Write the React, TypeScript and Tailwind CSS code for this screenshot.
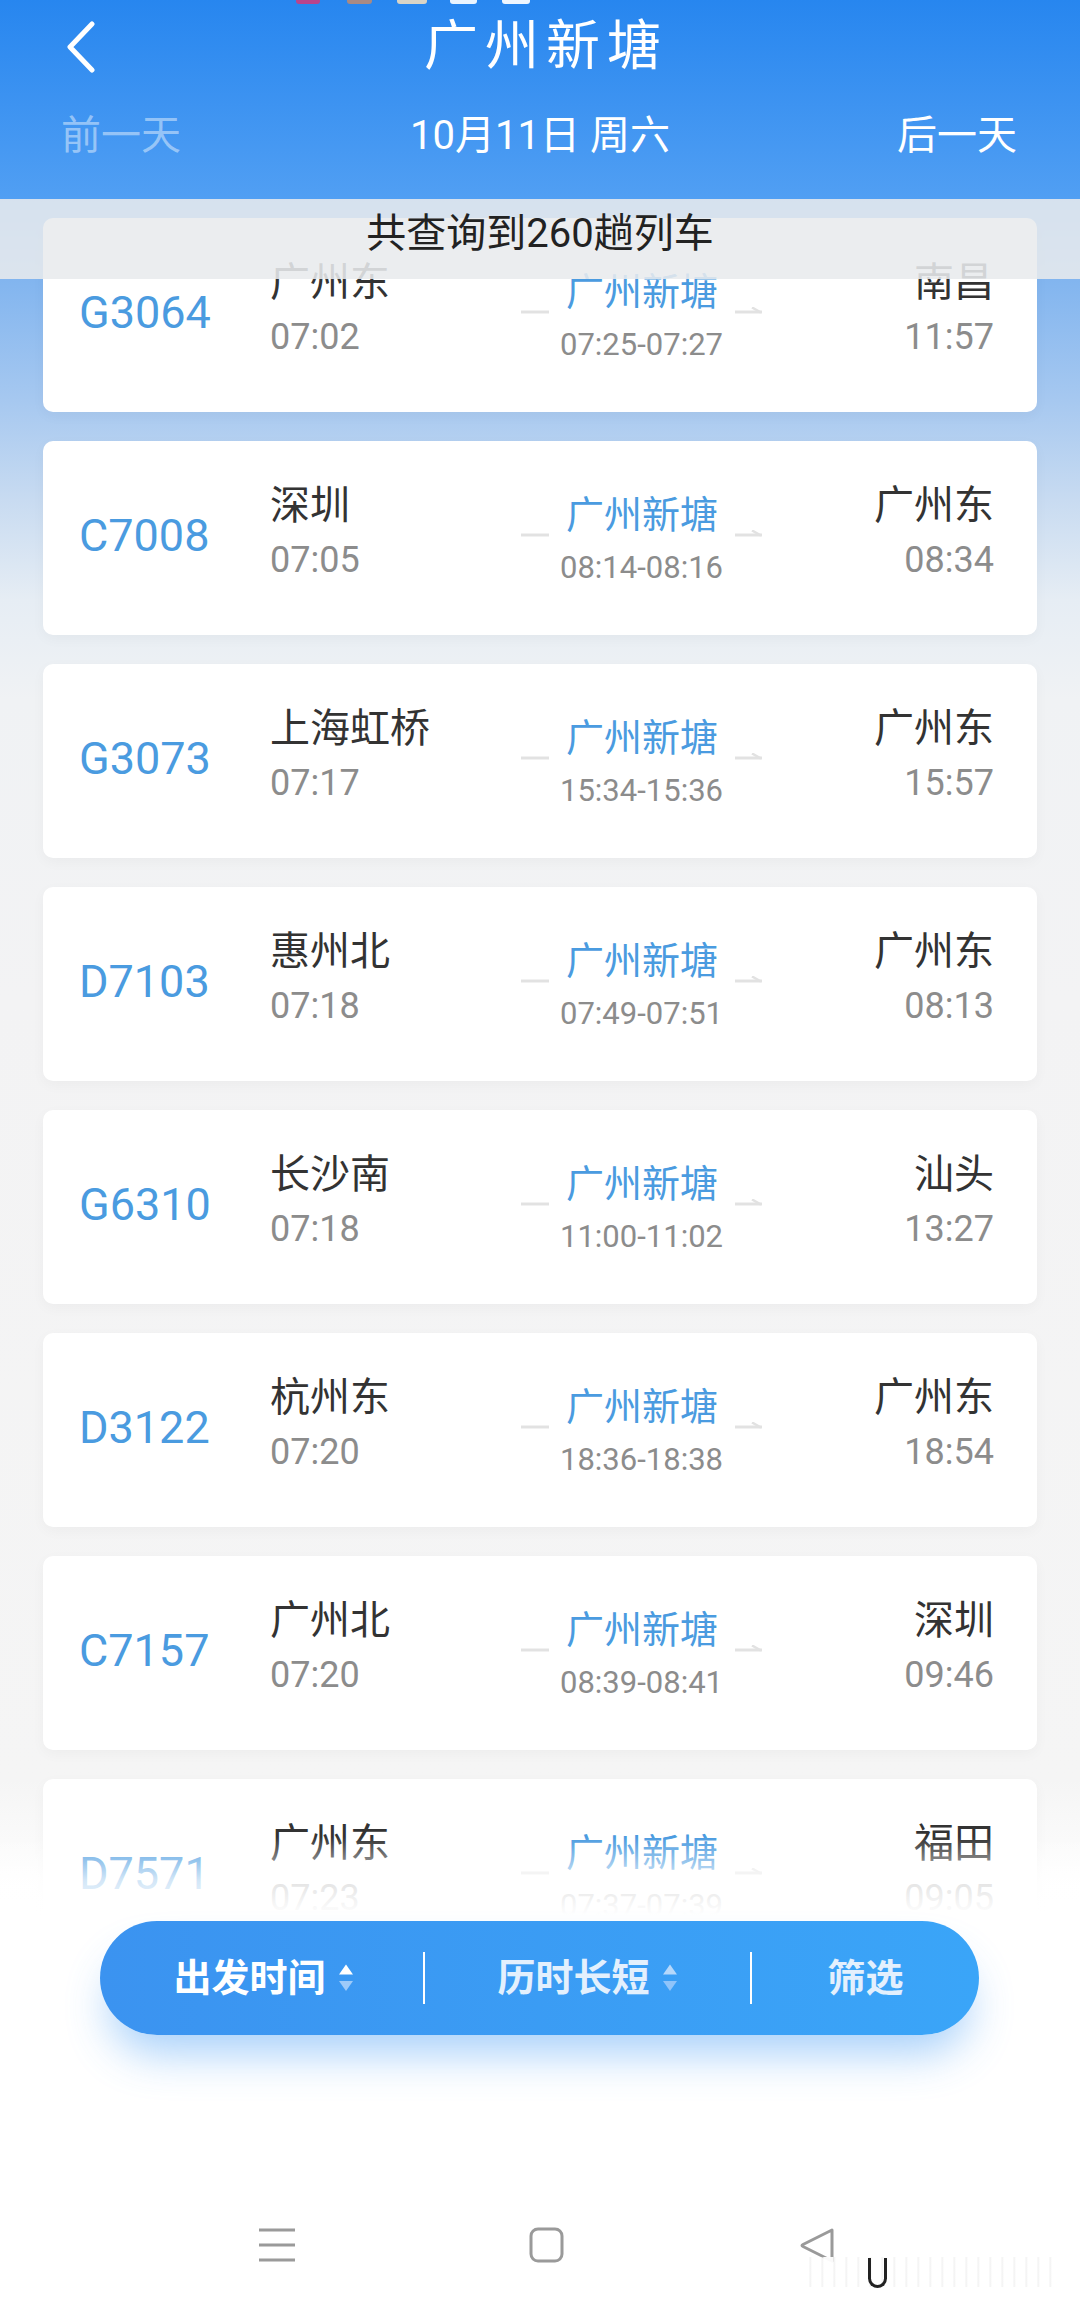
import React from "react";

type Train = {
  no: string;
  from: string;
  dep: string;
  stop: string;
  to: string;
  arr: string;
};

const trains: Train[] = [
  { no: "G3064", from: "广州东", dep: "07:02", stop: "07:25-07:27", to: "南昌", arr: "11:57" },
  { no: "C7008", from: "深圳", dep: "07:05", stop: "08:14-08:16", to: "广州东", arr: "08:34" },
  { no: "G3073", from: "上海虹桥", dep: "07:17", stop: "15:34-15:36", to: "广州东", arr: "15:57" },
  { no: "D7103", from: "惠州北", dep: "07:18", stop: "07:49-07:51", to: "广州东", arr: "08:13" },
  { no: "G6310", from: "长沙南", dep: "07:18", stop: "11:00-11:02", to: "汕头", arr: "13:27" },
  { no: "D3122", from: "杭州东", dep: "07:20", stop: "18:36-18:38", to: "广州东", arr: "18:54" },
  { no: "C7157", from: "广州北", dep: "07:20", stop: "08:39-08:41", to: "深圳", arr: "09:46" },
  { no: "D7571", from: "广州东", dep: "07:23", stop: "07:37-07:39", to: "福田", arr: "09:05" },
];

function TrainCard({ t }: { t: Train }) {
  return (
    <div className="mx-[43px] h-[194px] shrink-0 rounded-[10px] bg-white shadow-[0_4px_14px_rgba(0,0,0,0.035)] pl-[36px] pr-[44px] grid grid-cols-[191px_251px_241px_232px]">
      <div className="pt-[72px]">
        <div className="text-[45px] leading-[46px] text-[#4a9be0]">{t.no}</div>
      </div>
      <div className="pt-[45px] flex flex-col">
        <div className="text-[40px] leading-[40px] text-[#333333]">{t.from}</div>
        <div className="mt-[16px] text-[36px] leading-[36px] text-[#8c8c8c]">{t.dep}</div>
      </div>
      <div className="pt-[55px] flex flex-col items-center">
        <div className="flex items-end">
          <svg width="28" height="8" viewBox="0 0 28 8" className="translate-y-[4px]">
            <line x1="0" y1="5" x2="28" y2="5" stroke="#e2e2e2" strokeWidth="3" />
          </svg>
          <div className="mx-[17px] text-[38px] leading-[38px] text-[#4a9be0]">广州新塘</div>
          <svg width="27" height="8" viewBox="0 0 27 8" className="translate-y-[4px]">
            <line x1="0" y1="5" x2="27" y2="5" stroke="#e2e2e2" strokeWidth="3" />
            <line x1="26" y1="5.5" x2="17" y2="0.5" stroke="#e2e2e2" strokeWidth="2.5" />
          </svg>
        </div>
        <div className="mt-[18px] text-[31px] leading-[31px] text-[#8c8c8c]">{t.stop}</div>
      </div>
      <div className="pt-[45px] flex flex-col items-end">
        <div className="text-[40px] leading-[40px] text-[#333333]">{t.to}</div>
        <div className="mt-[16px] text-[36px] leading-[36px] text-[#8c8c8c]">{t.arr}</div>
      </div>
    </div>
  );
}

function SortArrows({ dim }: { dim?: boolean }) {
  return (
    <svg width="16" height="28" viewBox="0 0 16 28" className="ml-[12px]">
      <path d="M8 0.5 L15 10.5 L1 10.5 Z" fill={dim ? "#b5d8fb" : "#ffffff"} />
      <path d="M1 17 L15 17 L8 27 Z" fill={dim ? "#8fc4fa" : "#9dcaf9"} />
    </svg>
  );
}

export default function App() {
  return (
    <div
      className="relative w-[1080px] h-[2311px] overflow-hidden flex flex-col bg-[linear-gradient(180deg,#2786ef_0px,#519ff3_199px,#82b5ef_280px,#a6c8f0_400px,#c8dbf1_500px,#e6edf4_600px,#f0f2f4_700px,#f3f3f4_1000px,#f5f5f5_1780px,#ffffff_1900px)]"
      style={{ fontFamily: "Roboto, 'Noto Sans CJK SC', sans-serif" }}
    >
      {/* Header */}
      <div className="relative h-[199px] shrink-0 flex flex-col">
        <div className="absolute top-[-6px] left-0 flex">
          <div className="ml-[296px] w-[24px] h-[10px] rounded-[3px] bg-[#b9448c]" />
          <div className="ml-[27px] w-[25px] h-[10px] rounded-[3px] bg-[#a88a84]" />
          <div className="ml-[25px] w-[30px] h-[10px] rounded-[3px] bg-[#d9d4c6]" />
          <div className="ml-[23px] w-[27px] h-[10px] rounded-[3px] bg-[#e9f4ff]" />
          <div className="ml-[25px] w-[28px] h-[10px] rounded-[3px] bg-[#eef6ff]" />
        </div>
        <div className="h-[94px] grid grid-cols-[1fr_auto_1fr] items-center">
          <div className="pl-[66px] flex items-center">
            <svg width="30" height="52" viewBox="0 0 30 52">
              <polyline
                points="26,3 4,26 26,49"
                fill="none"
                stroke="#ffffff"
                strokeWidth="5"
                strokeLinecap="round"
                strokeLinejoin="round"
              />
            </svg>
          </div>
          <div className="pl-[12px] text-[54px] leading-[54px] tracking-[7px] text-white">广州新塘</div>
          <div />
        </div>
        <div className="h-[84px] grid grid-cols-[1fr_auto_1fr] items-center text-[40px] leading-[40px]">
          <div className="pl-[61px] text-white/45">前一天</div>
          <div className="text-white">10月11日 周六</div>
          <div className="pr-[63px] text-right text-white">后一天</div>
        </div>
      </div>

      {/* List */}
      <div className="relative h-[1716px] shrink-0 overflow-hidden">
        <div className="pt-[19px] flex flex-col gap-[29px]">
          {trains.map((t) => (
            <TrainCard key={t.no} t={t} />
          ))}
        </div>
        <div className="absolute top-0 left-0 right-0 h-[80px] bg-[rgba(232,234,237,0.88)] flex items-center justify-center">
          <span className="text-[40px] leading-[40px] text-[#222222] translate-y-[-5px]">共查询到260趟列车</span>
        </div>
        <div className="absolute bottom-0 left-0 right-0 h-[78px] bg-[linear-gradient(180deg,rgba(255,255,255,0)_0%,rgba(255,255,255,0.75)_55%,#ffffff_100%)]" />
      </div>

      {/* Bottom */}
      <div className="relative flex-1 bg-white flex flex-col">
        <div className="mt-[6px] ml-[100px] w-[879px] h-[114px] rounded-full bg-[linear-gradient(90deg,#3b93f0,#3aa5f8)] shadow-[0_28px_44px_-10px_rgba(59,150,245,0.45)] flex items-center">
          <div className="w-[323px] flex items-center justify-center pl-[4px]">
            <span className="text-[38px] leading-[40px] font-bold text-white">出发时间</span>
            <SortArrows />
          </div>
          <div className="w-[2px] h-[52px] bg-white" />
          <div className="w-[325px] flex items-center justify-center">
            <span className="text-[38px] leading-[40px] font-bold text-[#e3f0fd]">历时长短</span>
            <SortArrows dim />
          </div>
          <div className="w-[2px] h-[52px] bg-white" />
          <div className="flex-1 flex items-center justify-center">
            <span className="text-[38px] leading-[40px] font-bold text-[#e3f0fd]">筛选</span>
          </div>
        </div>

        {/* nav bar */}
        <div className="mt-[192px] flex items-start pl-[258px]">
          <svg width="38" height="36" viewBox="0 0 38 36">
            <line x1="1" y1="3" x2="37" y2="3" stroke="#9a9a9a" strokeWidth="3" />
            <line x1="1" y1="18" x2="37" y2="18" stroke="#9a9a9a" strokeWidth="3" />
            <line x1="1" y1="33" x2="37" y2="33" stroke="#9a9a9a" strokeWidth="3" />
          </svg>
          <svg width="36" height="36" viewBox="0 0 36 36" className="ml-[233px]">
            <rect x="2" y="2" width="31" height="32" rx="7" fill="none" stroke="#9a9a9a" strokeWidth="3" />
          </svg>
          <svg width="36" height="38" viewBox="0 0 36 38" className="ml-[235px]">
            <path
              d="M32 3 L3 17.5 Q1 18.5 3 19.5 L32 34 Z"
              fill="none"
              stroke="#9a9a9a"
              strokeWidth="3"
              strokeLinejoin="round"
            />
          </svg>
        </div>
        <div className="absolute left-[800px] top-[342px] w-[255px] h-[30px] bg-[repeating-linear-gradient(90deg,rgba(255,255,255,0.95)_0px,rgba(255,255,255,0.95)_9px,rgba(215,215,215,0.35)_10px,rgba(255,255,255,0.95)_12px)]" />
        <div className="absolute left-[868px] top-[343px] w-[19px] h-[30px] border-[3px] border-t-0 border-[#222222] rounded-b-full" />
      </div>
    </div>
  );
}
